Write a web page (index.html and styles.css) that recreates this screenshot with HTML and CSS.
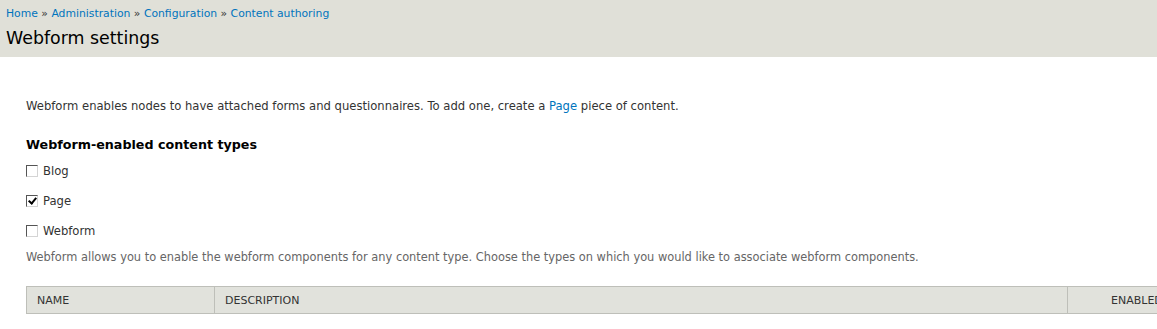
FILE: index.html
```html
<!DOCTYPE html>
<html lang="en">
<head>
    <meta charset="UTF-8">
    <title>Webform settings</title>
    <link rel="stylesheet" href="styles.css">
</head>
<body>
    <div class="page-header">
        <div class="breadcrumb">
            <a href="#">Home</a> » <a href="#">Administration</a> » <a href="#">Configuration</a> » <a href="#">Content authoring</a>
        </div>
        <h1>Webform settings</h1>
    </div>
    <div class="content">
        <p class="intro">Webform enables nodes to have attached forms and questionnaires. To add one, create a <a href="#">Page</a> piece of content.</p>
        <div class="form-item">
            <h3>Webform-enabled content types</h3>
            <label class="check"><input type="checkbox"> Blog</label>
            <label class="check"><input type="checkbox" checked> Page</label>
            <label class="check"><input type="checkbox"> Webform</label>
            <div class="description">Webform allows you to enable the webform components for any content type. Choose the types on which you would like to associate webform components.</div>
        </div>
        <table class="components">
            <thead>
                <tr>
                    <th class="col-name">Name</th>
                    <th class="col-desc">Description</th>
                    <th class="col-enabled">Enabled</th>
                </tr>
            </thead>
            <tbody>
                <tr><td></td><td></td><td></td></tr>
            </tbody>
        </table>
    </div>
</body>
</html>
```

FILE: styles.css
```css
body {
    margin: 0;
    font-family: "DejaVu Sans", Verdana, sans-serif;
    font-size: 11.6px;
    color: #333;
    background-color: #fff;
    overflow: hidden;
}
a {
    color: #0074bd;
    text-decoration: none;
}
.page-header {
    background-color: #e0e0d8;
    padding: 7px 6px 0;
    height: 50px;
}
.breadcrumb {
    font-size: 10.8px;
    color: #333;
}
h1 {
    margin: 8px 0 0;
    font-size: 17.4px;
    font-weight: normal;
    color: #000;
}
.content {
    padding: 0 26px;
}
.intro {
    margin: 42px 0 0;
}
h3 {
    margin: 24px 0 4px;
    font-size: 12.7px;
    font-weight: bold;
    color: #000;
}
.check {
    display: flex;
    align-items: center;
    height: 30px;
}
.check input {
    appearance: none;
    margin: 0 5px 0 0;
    width: 12px;
    height: 12px;
    box-sizing: border-box;
    border: 1px solid;
    border-color: #555 #d4d4d4 #d4d4d4 #555;
    background-color: #fff;
    position: relative;
}
.check input:checked::after {
    content: "";
    position: absolute;
    left: 3px;
    top: 0;
    width: 3px;
    height: 6px;
    border: solid #000;
    border-width: 0 2px 2px 0;
    transform: rotate(40deg);
}
.description {
    color: #666;
    font-size: 11.4px;
    margin-top: 4px;
}
.components {
    margin-top: 22px;
    width: 1220px;
    border-collapse: collapse;
    table-layout: fixed;
}
.components th {
    background-color: #e1e2dc;
    border: 1px solid #bebfb9;
    font-weight: normal;
    text-transform: uppercase;
    text-align: left;
    height: 26px;
    padding: 0 10px;
    font-size: 11px;
    color: #333;
}
.components .col-name {
    width: 167px;
}
.components .col-enabled {
    width: 124px;
    padding-left: 43px;
}
.components td {
    height: 20px;
}
```
